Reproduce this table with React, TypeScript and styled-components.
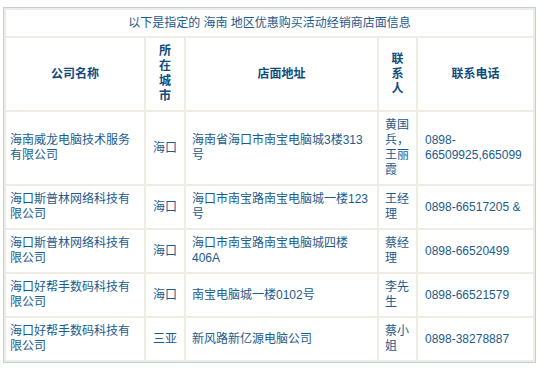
import styled, { createGlobalStyle } from 'styled-components'

const GlobalStyle = createGlobalStyle`
  html, body {
    margin: 0;
    padding: 0;
    background: #ffffff;
  }
  body {
    font-family: "Liberation Sans", "Noto Sans CJK SC", sans-serif;
    font-size: 12px;
  }
`

type Shop = {
  company: string
  city: string
  address: string
  contact: string
  phone: React.ReactNode
}

const shops: Shop[] = [
  {
    company: '海南威龙电脑技术服务有限公司',
    city: '海口',
    address: '海南省海口市南宝电脑城3楼313号',
    contact: '黄国兵，王丽霞',
    phone: (
      <>
        0898-
        <br />
        66509925,665099
      </>
    ),
  },
  {
    company: '海口斯普林网络科技有限公司',
    city: '海口',
    address: '海口市南宝路南宝电脑城一楼123号',
    contact: '王经理',
    phone: '0898-66517205 &',
  },
  {
    company: '海口斯普林网络科技有限公司',
    city: '海口',
    address: '海口市南宝路南宝电脑城四楼406A',
    contact: '蔡经理',
    phone: '0898-66520499',
  },
  {
    company: '海口好帮手数码科技有限公司',
    city: '海口',
    address: '南宝电脑城一楼0102号',
    contact: '李先生',
    phone: '0898-66521579',
  },
  {
    company: '海口好帮手数码科技有限公司',
    city: '三亚',
    address: '新风路新亿源电脑公司',
    contact: '蔡小姐',
    phone: '0898-38278887',
  },
]

function App() {
  return (
    <>
      <GlobalStyle />
      <Page>
        <ShopTable>
          <colgroup>
            <col style={{ width: 138 }} />
            <col style={{ width: 38 }} />
            <col style={{ width: 191 }} />
            <col style={{ width: 37 }} />
            <col style={{ width: 115 }} />
          </colgroup>
          <thead>
            <tr>
              <TitleCell colSpan={5}>以下是指定的 海南 地区优惠购买活动经销商店面信息</TitleCell>
            </tr>
            <tr>
              <HeadCell>公司名称</HeadCell>
              <HeadCell>
                <Stack>所在城市</Stack>
              </HeadCell>
              <HeadCell>店面地址</HeadCell>
              <HeadCell>
                <Stack>联系人</Stack>
              </HeadCell>
              <HeadCell>联系电话</HeadCell>
            </tr>
          </thead>
          <tbody>
            {shops.map((s, i) => (
              <tr key={i}>
                <Cell $padLeft={4}>{s.company}</Cell>
                <Cell $center>{s.city}</Cell>
                <Cell $padLeft={6}>{s.address}</Cell>
                <Cell $padLeft={6}>{s.contact}</Cell>
                <Cell $padLeft={7}>{s.phone}</Cell>
              </tr>
            ))}
          </tbody>
        </ShopTable>
      </Page>
    </>
  )
}

export default App

const Page = styled.div`
  padding: 7px 0 0 3px;
`

const ShopTable = styled.table`
  width: 533px;
  table-layout: fixed;
  border-collapse: separate;
  border-spacing: 2px;
  border: 1px solid #bcd0de;
  background: #efece3;
  color: #1c5b8e;
`

const TitleCell = styled.td`
  background: #ffffff;
  height: 26px;
  padding: 0;
  text-align: center;
  line-height: 14px;
  color: #1c5a8c;
`

const HeadCell = styled.th`
  background: #ffffff;
  height: 72px;
  padding: 0;
  text-align: center;
  vertical-align: middle;
  font-weight: bold;
  line-height: 15px;
  color: #0f4b7d;
`

const Stack = styled.span`
  display: inline-block;
  width: 13px;
  word-break: break-all;
`

const Cell = styled.td<{ $padLeft?: number; $center?: boolean }>`
  background: #ffffff;
  padding: 6px 6px 6px ${(p) => p.$padLeft ?? 6}px;
  ${(p) => (p.$center ? 'padding: 6px 0; text-align: center;' : '')}
  vertical-align: middle;
  line-height: 15px;
  word-break: normal;
  overflow: hidden;
`
